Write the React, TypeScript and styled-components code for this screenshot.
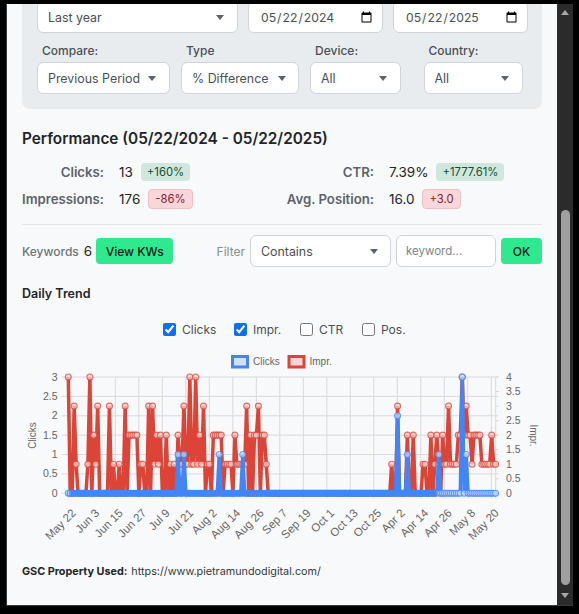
import React from "react";
import styled, { createGlobalStyle } from "styled-components";

const Global = createGlobalStyle`
  html, body { margin: 0; padding: 0; background: #000; }
  * { box-sizing: border-box; }
`;

const Win = styled.div`
  width: 579px;
  height: 614px;
  background: #000;
  padding: 4px 6px 8px 6px;
  display: flex;
  overflow: hidden;
  font-family: Inter, "Liberation Sans", sans-serif;
  color: #212529;
`;
const Viewport = styled.div`
  width: 551px;
  height: 602px;
  overflow: hidden;
  background: #f8f9fb;
  border-left: 1px solid #3a3a3a;
  border-bottom: 1px solid #3a3a3a;
  padding: 0 15px 0 15px;
`;
const Track = styled.div`
  width: 16px;
  height: 602px;
  background: #2b2b2b;
  border-bottom: 1px solid #3a3a3a;
  display: flex;
  flex-direction: column;
  align-items: center;
`;
const ArrowUp = styled.div`
  width: 0;
  height: 0;
  margin-top: 6px;
  border-left: 4.5px solid transparent;
  border-right: 4.5px solid transparent;
  border-bottom: 5px solid #a8a8a8;
`;
const Thumb = styled.div`
  width: 9px;
  height: 375px;
  margin-top: 195px;
  background: #9f9f9f;
  border-radius: 5px;
`;
const ArrowDown = styled.div`
  width: 0;
  height: 0;
  margin-top: 8px;
  border-left: 4.5px solid transparent;
  border-right: 4.5px solid transparent;
  border-top: 5px solid #a8a8a8;
`;

const FilterPanel = styled.div`
  margin-top: -3px;
  background: #e9ecef;
  border-radius: 0 0 8px 8px;
  padding: 0 15px 15px;
  height: 108px;
`;
const TopRow = styled.div`
  display: flex;
  gap: 10.5px;
`;
const BottomRow = styled.div`
  display: flex;
  margin-top: 9px;
`;
const Field = styled.div<{ $w: number; $ml?: number }>`
  width: ${(p) => p.$w}px;
  margin-left: ${(p) => p.$ml ?? 0}px;
  flex: none;
`;
const FieldLabel = styled.div`
  font-size: 12px;
  font-weight: 500;
  line-height: 18px;
  height: 20px;
  padding-left: 5px;
  color: #495057;
`;
const SelectWrap = styled.div<{ $h: number; $w?: number; $arrow: number }>`
  position: relative;
  height: ${(p) => p.$h}px;
  width: ${(p) => (p.$w ? `${p.$w}px` : "100%")};
  flex: none;
  &::after {
    content: "";
    position: absolute;
    right: ${(p) => p.$arrow}px;
    top: 50%;
    margin-top: -2px;
    border-left: 4.5px solid transparent;
    border-right: 4.5px solid transparent;
    border-top: 5px solid #5c636a;
    pointer-events: none;
  }
`;
const Select = styled.select`
  appearance: none;
  width: 100%;
  height: 100%;
  background: #fff;
  border: 1px solid #ced4da;
  border-radius: 6px;
  padding: 0 10px;
  font: 400 12.4px Inter, "Liberation Sans", sans-serif;
  color: #495057;
  outline: none;
`;
const DateInput = styled.input<{ $w: number }>`
  width: ${(p) => p.$w}px;
  height: 32px;
  flex: none;
  background: #fff;
  border: 1px solid #ced4da;
  border-radius: 6px;
  padding: 0 7px 0 11px;
  font: 400 12.2px Inter, "Liberation Sans", sans-serif;
  color: #495057;
`;

const Title = styled.h2`
  margin: 20px 0 0;
  font-size: 15.35px;
  font-weight: 600;
  line-height: 20px;
  color: #212529;
`;
const Stats = styled.div`
  display: grid;
  grid-template-columns: 82px 1fr 87px 1fr;
  column-gap: 15px;
  margin-top: 13px;
  row-gap: 7px;
`;
const StatLabel = styled.div`
  justify-self: end;
  white-space: nowrap;
  font-size: 13.2px;
  font-weight: 600;
  color: #5c636a;
  align-self: center;
`;
const StatValue = styled.div`
  display: flex;
  align-items: center;
  gap: 8px;
  font-size: 13.5px;
  color: #212529;
  height: 20px;
`;
const Pill = styled.span<{ $bad?: boolean }>`
  display: inline-block;
  font-size: 11.3px;
  line-height: 18px;
  padding: 0 6px;
  border-radius: 4px;
  background: ${(p) => (p.$bad ? "#f8d7da" : "#d1e7dd")};
  color: ${(p) => (p.$bad ? "#842029" : "#0f5132")};
  border: ${(p) => (p.$bad ? "1px solid #f1bfc4" : "none")};
`;
const Divider = styled.hr`
  border: none;
  border-top: 1px solid #e3e5e8;
  margin: 15px 0 10px;
`;
const KeywordRow = styled.div`
  display: flex;
  align-items: center;
  height: 32px;
`;
const KwLabel = styled.span`
  font-size: 12px;
  font-weight: 500;
  color: #6c757d;
`;
const KwCount = styled.span`
  font-size: 13.5px;
  color: #212529;
  margin: 0 4px 0 5px;
`;
const GreenBtn = styled.button<{ $w: number }>`
  width: ${(p) => p.$w}px;
  height: 26px;
  flex: none;
  border: none;
  border-radius: 4px;
  background: #2fe98f;
  color: #10201a;
  font: 500 12px Inter, "Liberation Sans", sans-serif;
  padding: 0;
`;
const FilterLabel = styled.span`
  margin-left: auto;
  font-size: 12px;
  color: #868e96;
  margin-right: 5px;
`;
const KeywordInput = styled.input`
  width: 100px;
  height: 32px;
  flex: none;
  margin: 0 5px;
  background: #fff;
  border: 1px solid #ced4da;
  border-radius: 6px;
  padding: 0 9px;
  font: 400 11.5px Inter, "Liberation Sans", sans-serif;
  &::placeholder { color: #7d848b; opacity: 1; }
`;
const Subtitle = styled.h3`
  margin: 18px 0 0;
  font-size: 12.5px;
  font-weight: 600;
  line-height: 18px;
  color: #212529;
`;
const Checks = styled.div`
  display: flex;
  margin: 17px 0 0 141px;
  height: 18px;
  align-items: center;
`;
const Check = styled.label<{ $w: number }>`
  width: ${(p) => p.$w}px;
  display: flex;
  align-items: center;
  gap: 6px;
  flex: none;
  font-size: 12px;
  color: #495057;
  & > input {
    margin: 0;
    width: 13px;
    height: 13px;
    accent-color: #0d6efd;
  }
`;
const ChartSvg = styled.svg`
  display: block;
  margin-top: 11px;
`;
const AxisText = styled.text`
  font-family: "Liberation Sans", Arial, sans-serif;
  fill: #666;
`;
const Footer = styled.div`
  margin-top: 14px;
  font-size: 10.8px;
  line-height: 14px;
  color: #343a40;
`;
const FooterKey = styled.b`
  font-weight: 700;
  color: #212529;
  margin-right: 4px;
`;

const red: Record<number, number> = {
  0: 4, 3: 3, 4: 1, 10: 1, 11: 4, 13: 2, 14: 1, 15: 3, 21: 3, 23: 1, 26: 1, 29: 3,
  31: 2, 32: 2, 33: 2, 34: 2, 35: 2, 37: 1, 38: 1, 41: 3, 43: 3, 44: 1, 45: 2, 46: 1, 47: 2,
  50: 2, 52: 1, 54: 1, 56: 2, 57: 1, 58: 1, 59: 3, 60: 1, 61: 1, 62: 4, 63: 1, 64: 1, 65: 4, 66: 1,
  67: 2, 68: 1, 69: 3, 71: 1, 72: 1, 74: 2, 75: 2, 76: 2, 77: 2, 78: 2, 80: 1, 81: 1, 82: 1, 83: 1,
  85: 2, 86: 1, 87: 1, 88: 1, 89: 1, 90: 1, 91: 3, 93: 2, 95: 2, 96: 2, 97: 3, 99: 2, 100: 2, 101: 1,
  165: 1, 168: 3, 173: 2, 176: 2, 181: 1, 182: 1, 185: 2, 187: 1, 188: 2, 189: 1, 191: 2, 192: 1, 193: 1,
  194: 3, 195: 1, 196: 1, 197: 1, 198: 1, 199: 2, 200: 2, 201: 4, 202: 2, 203: 3, 204: 2, 205: 2, 206: 1,
  207: 2, 208: 2, 209: 2, 210: 2, 211: 1, 212: 1, 213: 1, 214: 1, 215: 1, 216: 2, 217: 1, 218: 1,
};
const blue: Record<number, number> = { 56: 1, 59: 1, 77: 1, 89: 1, 168: 2, 173: 1, 189: 1, 201: 3, 203: 1 };

const N = 219;
const X0 = 68.3;
const STEP = 1.96;
const Y0 = 493.3;
const H = 116.3;
const xOf = (i: number) => X0 + i * STEP;
const series = (d: Record<number, number>, max: number) =>
  Array.from({ length: N }, (_, i) => ({ x: xOf(i), y: Y0 - ((d[i] ?? 0) / max) * H }));

const ticks = ["May 22", "Jun 3", "Jun 15", "Jun 27", "Jul 9", "Jul 21", "Aug 2", "Aug 14", "Aug 26", "Sep 7", "Sep 19", "Oct 1", "Oct 13", "Oct 25", "Apr 2", "Apr 14", "Apr 26", "May 8", "May 20"];
const leftTicks = ["0", "0.5", "1", "1.5", "2", "2.5", "3"];
const rightTicks = ["0", "0.5", "1", "1.5", "2", "2.5", "3", "3.5", "4"];

const Line = ({ pts, color, fill, ring }: { pts: { x: number; y: number }[]; color: string; fill: string; ring: string }) => (
  <g>
    <polyline points={pts.map((p) => `${p.x},${p.y}`).join(" ")} fill="none" stroke={color} strokeWidth={3.5} strokeLinejoin="bevel" />
    {pts.map((p, i) => (
      <circle key={i} cx={p.x} cy={p.y} r={3} fill={fill} stroke={ring} strokeWidth={1.1} />
    ))}
  </g>
);

const Chart = () => (
  <ChartSvg width={520} height={202} viewBox="22 349 520 202">
    {leftTicks.map((t, i) => {
      const y = Y0 - (i / 6) * H;
      return (
        <g key={t}>
          <line x1={61.5} x2={498.5} y1={y} y2={y} stroke="#d9d9dc" />
          <AxisText x={57.5} y={y + 3.5} fontSize={10.5} textAnchor="end">{t}</AxisText>
        </g>
      );
    })}
    {rightTicks.map((t, i) => (
      <AxisText key={t} x={506} y={Y0 - (i / 8) * H + 3.5} fontSize={10.5}>{t}</AxisText>
    ))}
    {rightTicks.map((t, i) => {
      const y = Y0 - (i / 8) * H;
      return <line key={t} x1={495.7} x2={499} y1={y} y2={y} stroke="#d9d9dc" />;
    })}
    {ticks.map((t, i) => {
      const x = X0 + i * 23.5;
      return (
        <g key={t + i}>
          <line x1={x} x2={x} y1={377} y2={498} stroke="#d9d9dc" />
          <AxisText fontSize={11.5} textAnchor="end" transform={`translate(${x + 5} 510.5) rotate(-45)`} dy="0.4em">{t}</AxisText>
        </g>
      );
    })}
    <line x1={495.7} x2={495.7} y1={377} y2={498} stroke="#d9d9dc" />
    <Line pts={series(red, 4)} color="#db4437" fill="rgba(246,205,201,0.75)" ring="rgba(219,68,55,0.75)" />
    <Line pts={series(blue, 3)} color="#4285f4" fill="rgba(198,218,252,0.7)" ring="rgba(66,133,244,0.75)" />
    <line x1={xOf(1)} x2={xOf(188)} y1={Y0} y2={Y0} stroke="#4285f4" strokeWidth={6.5} />
    <rect x={232.5} y={356.5} width={15} height={10.5} fill="#d0e0fb" stroke="#4285f4" strokeWidth={3} />
    <AxisText x={253} y={365} fontSize={10}>Clicks</AxisText>
    <rect x={289} y={356.5} width={15} height={10.5} fill="#f6d5d2" stroke="#db4437" strokeWidth={3} />
    <AxisText x={309.5} y={365} fontSize={10}>Impr.</AxisText>
    <AxisText fontSize={10} textAnchor="middle" transform="translate(36 435.5) rotate(-90)">Clicks</AxisText>
    <AxisText fontSize={10} textAnchor="middle" transform="translate(530 435.5) rotate(90)">Impr.</AxisText>
  </ChartSvg>
);

export default function App() {
  return (
    <>
      <Global />
      <Win>
        <Viewport>
          <FilterPanel>
            <TopRow>
              <SelectWrap $h={32} $w={200.5} $arrow={14}>
                <Select defaultValue="Last year"><option>Last year</option></Select>
              </SelectWrap>
              <DateInput $w={134.5} type="date" defaultValue="2024-05-22" />
              <DateInput $w={134.5} type="date" defaultValue="2025-05-22" />
            </TopRow>
            <BottomRow>
              <Field $w={133}>
                <FieldLabel>Compare:</FieldLabel>
                <SelectWrap $h={32} $arrow={14}><Select><option>Previous Period</option></Select></SelectWrap>
              </Field>
              <Field $w={118} $ml={11}>
                <FieldLabel>Type</FieldLabel>
                <SelectWrap $h={32} $arrow={13}><Select><option>% Difference</option></Select></SelectWrap>
              </Field>
              <Field $w={90.5} $ml={11}>
                <FieldLabel>Device:</FieldLabel>
                <SelectWrap $h={32} $arrow={14}><Select><option>All</option></Select></SelectWrap>
              </Field>
              <Field $w={99} $ml={23}>
                <FieldLabel>Country:</FieldLabel>
                <SelectWrap $h={32} $arrow={14}><Select><option>All</option></Select></SelectWrap>
              </Field>
            </BottomRow>
          </FilterPanel>

          <Title>Performance (05/22/2024 - 05/22/2025)</Title>
          <Stats>
            <StatLabel>Clicks:</StatLabel>
            <StatValue>13 <Pill>+160%</Pill></StatValue>
            <StatLabel>CTR:</StatLabel>
            <StatValue>7.39% <Pill>+1777.61%</Pill></StatValue>
            <StatLabel>Impressions:</StatLabel>
            <StatValue>176 <Pill $bad>-86%</Pill></StatValue>
            <StatLabel>Avg. Position:</StatLabel>
            <StatValue>16.0 <Pill $bad>+3.0</Pill></StatValue>
          </Stats>
          <Divider />
          <KeywordRow>
            <KwLabel>Keywords</KwLabel>
            <KwCount>6</KwCount>
            <GreenBtn $w={77}>View KWs</GreenBtn>
            <FilterLabel>Filter</FilterLabel>
            <SelectWrap $h={32} $w={141} $arrow={13}><Select><option>Contains</option></Select></SelectWrap>
            <KeywordInput placeholder="keyword..." />
            <GreenBtn $w={41}>OK</GreenBtn>
          </KeywordRow>
          <Subtitle>Daily Trend</Subtitle>
          <Checks>
            <Check $w={71}><input type="checkbox" defaultChecked />Clicks</Check>
            <Check $w={66}><input type="checkbox" defaultChecked />Impr.</Check>
            <Check $w={62}><input type="checkbox" />CTR</Check>
            <Check $w={60}><input type="checkbox" />Pos.</Check>
          </Checks>
          <Chart />
          <Footer><FooterKey>GSC Property Used:</FooterKey>https://www.pietramundodigital.com/</Footer>
        </Viewport>
        <Track>
          <ArrowUp />
          <Thumb />
          <ArrowDown />
        </Track>
      </Win>
    </>
  );
}
